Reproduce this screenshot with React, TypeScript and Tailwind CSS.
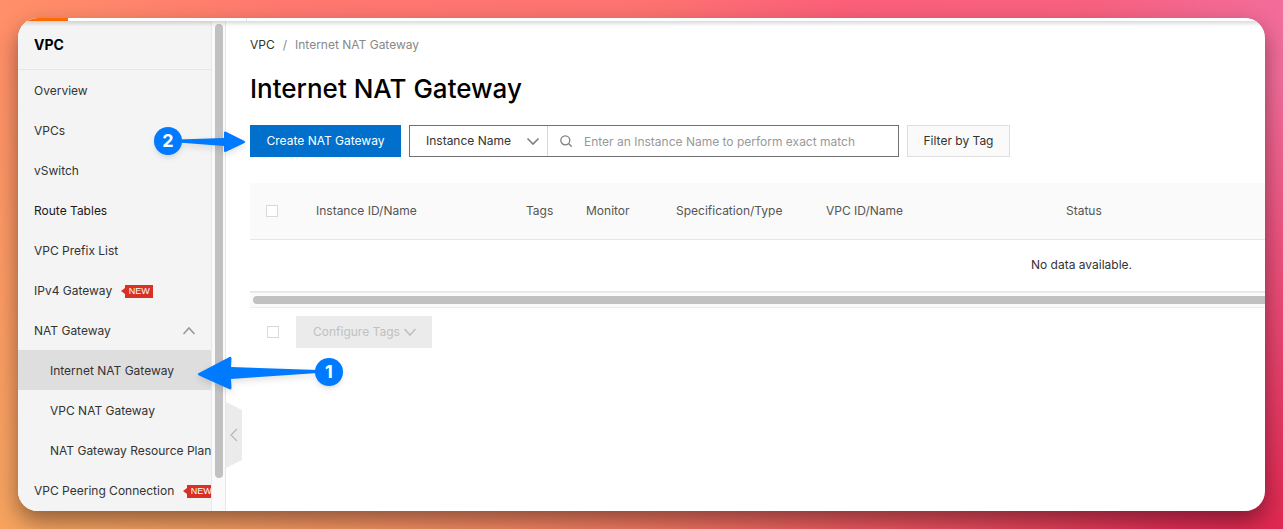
import { ReactNode } from "react";
import clsx from "clsx";

type NavItem = { label: string; isNew?: boolean; open?: boolean; sub?: boolean; active?: boolean; dark?: boolean };

const navItems: NavItem[] = [
  { label: "Overview" },
  { label: "VPCs" },
  { label: "vSwitch" },
  { label: "Route Tables", dark: true },
  { label: "VPC Prefix List" },
  { label: "IPv4 Gateway", isNew: true },
  { label: "NAT Gateway", open: true },
  { label: "Internet NAT Gateway", sub: true, active: true },
  { label: "VPC NAT Gateway", sub: true },
  { label: "NAT Gateway Resource Plan", sub: true },
  { label: "VPC Peering Connection", isNew: true },
];

function Chevron({ d, className }: { d: string; className: string }) {
  return (
    <svg viewBox="0 0 14 14" className={className} fill="none" stroke="currentColor" strokeWidth="1.6" aria-hidden="true">
      <path d={d} />
    </svg>
  );
}

function NewBadge() {
  return (
    <span className="ml-[9px] flex shrink-0 items-center">
      <svg viewBox="0 0 4 6" className="h-1.5 w-1" aria-hidden="true">
        <path d="M4 0 0 3l4 3z" fill="#d93026" />
      </svg>
      <span className="flex h-[13px] w-7 items-center justify-center bg-[#d93026] font-['Liberation_Sans'] text-[9px] leading-none text-white">
        NEW
      </span>
    </span>
  );
}

function Sidebar() {
  return (
    <aside className="flex w-[208px] shrink-0 border-r border-[#e8e8e8] bg-[#f4f4f4]">
      <div className="min-w-0 flex-1 overflow-hidden">
        <div className="flex h-[49px] items-center border-b border-[#e6e6e6] pl-4 text-sm font-bold text-black">VPC</div>
        <nav>
          {navItems.map((item) => (
            <a
              key={item.label}
              href="#"
              className={clsx(
                "flex h-10 items-center pt-0.5 whitespace-nowrap text-xs",
                item.sub ? "pl-8" : "pl-4",
                item.active && "bg-[#dedede]",
                item.dark ? "text-[#1a1a1a]" : "text-[#333]"
              )}
            >
              {item.label}
              {item.isNew && <NewBadge />}
              {item.open && <Chevron d="M1.500 10 7 4l5.500 6" className="mr-[15px] ml-auto size-3.5 text-[#999]" />}
            </a>
          ))}
        </nav>
      </div>
      {/* scrollbar */}
      <div className="w-[14px] shrink-0 border-l border-[#e8e8e8] bg-[#fafafa] px-[3px] pt-[3px]">
        <div className="h-[454px] w-2 rounded-full bg-[#c1c1c1]" />
      </div>
    </aside>
  );
}

function Toolbar() {
  return (
    <div className="mt-5 flex gap-2 text-xs">
      <button className="h-8 w-[151px] bg-[#0070cc] text-white">Create NAT Gateway</button>
      <div className="flex h-8 w-[490px] border border-[#707070] bg-white">
        <div className="relative w-[138px] shrink-0 border-r border-[#d8d8d8]">
          <select aria-label="Search field" className="size-full appearance-none bg-transparent pl-4 text-[#333]">
            <option>Instance Name</option>
          </select>
          <Chevron d="M1.500 4.500 7 10l5.500-5.500" className="pointer-events-none absolute top-2 right-[7px] size-3.5 text-[#808080]" />
        </div>
        <label className="flex min-w-0 flex-1 items-center gap-3 pl-3">
          <svg viewBox="0 0 12 12" className="size-3 shrink-0 text-[#808080]" fill="none" stroke="currentColor" strokeWidth="1.3" aria-hidden="true">
            <circle cx="5.300" cy="5.300" r="4.500" />
            <path d="m8.500 8.500 3.200 3.200" />
          </svg>
          <input
            aria-label="Instance name"
            placeholder="Enter an Instance Name to perform exact match"
            className="min-w-0 flex-1 pt-0.5 outline-none placeholder:text-[#999]"
          />
        </label>
      </div>
      <button className="h-8 w-[103px] border border-[#dedede] bg-[#fafafa] text-[#333]">Filter by Tag</button>
    </div>
  );
}

function CheckBox({ label }: { label: string }) {
  return <input type="checkbox" aria-label={label} className="block size-3 appearance-none border border-[#d9d9d9] bg-white" />;
}

const columns = [
  { name: "Instance ID/Name", width: "w-[210px]" },
  { name: "Tags", width: "w-[60px]" },
  { name: "Monitor", width: "w-[90px]" },
  { name: "Specification/Type", width: "w-[150px]" },
  { name: "VPC ID/Name", width: "w-[240px]" },
  { name: "Status", width: "w-[863px]" },
];

function GatewayTable() {
  return (
    <div className="mt-[26px]">
      <div className="overflow-hidden">
        <table className="w-[1663px] table-fixed border-collapse text-xs">
          <thead>
            <tr className="h-14 border-b border-[#e6e6e6] bg-[#fafafa] text-left text-[#555]">
              <th className="w-[50px] pl-4">
                <CheckBox label="Select all gateways" />
              </th>
              {columns.map((c) => (
                <th key={c.name} className={clsx(c.width, "pl-4 font-normal")}>
                  {c.name}
                </th>
              ))}
            </tr>
          </thead>
          <tbody>
            <tr className="h-[52px] border-b border-[#e6e6e6] text-center text-[#333]">
              <td colSpan={7}>No data available.</td>
            </tr>
          </tbody>
        </table>
      </div>
      <div className="overflow-hidden border-y border-[#ebebeb] bg-[#fafafa] py-[3px] pl-[3px]">
        <div className="h-2 rounded-l-full bg-[#c1c1c1]" />
      </div>
    </div>
  );
}

function Marker({ children, className }: { children: ReactNode; className: string }) {
  return (
    <span className={clsx("absolute flex size-7 items-center justify-center rounded-full bg-[#007aff] text-lg leading-none font-bold text-white shadow-md", className)}>
      {children}
    </span>
  );
}

export default function App() {
  return (
    <div className="flex min-h-screen bg-[radial-gradient(ellipse_at_bottom_left,#f6a45f_0%,transparent_65%),radial-gradient(ellipse_at_bottom_right,#e0274f_0%,transparent_60%),linear-gradient(90deg,#ff9068_0%,#ff786f_22%,#fd7370_50%,#fb5f79_66%,#f7617f_85%,#f26c9a_100%)] p-[18px] font-['Inter',sans-serif]">
      <div className="relative flex min-w-0 flex-1 rounded-[20px] shadow-[0_10px_22px_rgba(0,0,0,0.42)]">
        <div className="flex min-w-0 flex-1 flex-col overflow-hidden rounded-[20px] bg-white">
          <div className="z-10 flex h-[3px] shrink-0 bg-white shadow-[0_1px_5px_rgba(0,0,0,0.3)]">
            <div className="w-[50px] bg-[#ff6a00]" />
            <div className="w-[179px] border-r border-[#e5e5e5]" />
          </div>
          <div className="flex min-h-0 flex-1">
            <Sidebar />
            <main className="min-w-0 flex-1 pt-4 pl-6">
              <div className="flex gap-2 text-xs leading-4">
                <a href="#" className="text-[#333]">VPC</a>
                <span className="text-[#888]">/</span>
                <span className="text-[#888]">Internet NAT Gateway</span>
              </div>
              <h1 className="mt-5 text-[26px] leading-8 font-medium text-black">Internet NAT Gateway</h1>
              <Toolbar />
              <GatewayTable />
              <div className="mt-2 flex items-center pl-[17px]">
                <CheckBox label="Select all" />
                <button disabled className="ml-[17px] flex h-8 w-[136px] items-center gap-[3px] bg-[#ebebeb] pl-[17px] text-xs text-[#c1c1c1]">
                  Configure Tags
                  <Chevron d="M1.500 4 7 10l5.500-6" className="size-3.5" />
                </button>
              </div>
            </main>
          </div>
        </div>

        {/* sidebar collapse handle */}
        <button aria-label="Collapse sidebar" className="absolute top-[384px] left-[208px] text-[#b8b8b8]">
          <svg viewBox="0 0 16 66" className="h-[66px] w-4" fill="none">
            <path d="M0 0 16 8v50L0 66z" fill="#ebebeb" />
            <path d="m11 27-6 6 6 6" stroke="currentColor" strokeWidth="1.300" />
          </svg>
        </button>

        {/* numbered steps */}
        <svg viewBox="0 0 120 36" className="pointer-events-none absolute top-[337px] left-[180px] h-9 w-[120px] drop-shadow-md" aria-hidden="true">
          <path d="M0 18.500 31 2.300Q33.500 1 33.500 3.500L33 12l87 3v3l-87 6 .500 8.500q0 3-2.500 1.600L1 20.500Q-.500 19.500 0 18.500z" fill="#007aff" />
        </svg>
        <Marker className="top-[340px] left-[297px]">1</Marker>
        <svg viewBox="0 0 68 24" className="pointer-events-none absolute top-[112px] left-[160px] h-6 w-[68px] drop-shadow-md" aria-hidden="true">
          <path d="M0 9.500 46 8V3q0-2 2-1.300L66.500 11q1 1 0 2L48 21.800q-2 .800-2-1.300V16L0 12.500z" fill="#007aff" />
        </svg>
        <Marker className="top-[109px] left-[136px]">2</Marker>
      </div>
    </div>
  );
}
